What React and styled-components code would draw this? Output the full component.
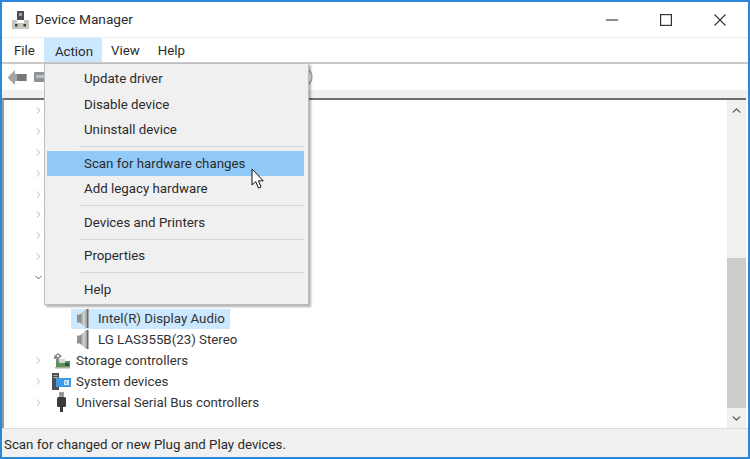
import styled, { createGlobalStyle } from "styled-components";
import { ChevronRight, ChevronDown, ChevronUp } from "lucide-react";

const GlobalStyle = createGlobalStyle`
  html, body { margin: 0; padding: 0; background: #fff; }
  body { font-family: Roboto, "Open Sans", sans-serif; color: #333; }
`;

const collapsed = [0, 1, 2, 3, 4, 5, 6, 7];

const AppIcon = () => (
  <svg width="17" height="18" viewBox="0 0 17 18">
    <rect x="5" y="0" width="7" height="10" fill="#4c4e55" />
    <rect x="7" y="2" width="3" height="3" fill="#8fa6b5" />
    <rect x="0" y="9" width="17" height="9" fill="#c9c6bd" />
    <rect x="5" y="9" width="7" height="3" fill="#fff" />
    <rect x="3" y="13" width="2.5" height="2.5" fill="#3c3c3c" />
    <rect x="11.5" y="13" width="2.5" height="2.5" fill="#3c3c3c" />
  </svg>
);

const BackIcon = () => (
  <svg width="20" height="17" viewBox="0 0 20 17">
    <path d="M0.5 8.5 L8 1 V5 H19.5 V12 H8 V16 Z" fill="#a3a3a3" />
    <path d="M10 5 H19.5 V12 H10 Z" fill="#777" />
  </svg>
);

const ToolIcon = () => (
  <svg width="12" height="10" viewBox="0 0 12 10">
    <rect x="0" y="0" width="12" height="10" rx="1" fill="#8e9396" />
    <rect x="2" y="3" width="8" height="3" fill="#bcc0c2" />
  </svg>
);

const HelpRing = () => (
  <svg width="20" height="20" viewBox="0 0 20 20">
    <circle cx="10" cy="10" r="9" fill="#fff" stroke="#a9a9a9" strokeWidth="1.5" />
  </svg>
);

const SpeakerIcon = () => (
  <svg width="16" height="21" viewBox="0 0 16 21">
    <defs>
      <linearGradient id="cone" x1="0" x2="1" y1="0" y2="0">
        <stop offset="0" stopColor="#7f837f" />
        <stop offset="0.55" stopColor="#d4d6d3" />
        <stop offset="1" stopColor="#999c99" />
      </linearGradient>
    </defs>
    <rect x="1" y="6.5" width="4" height="8" fill="#8f928f" />
    <path d="M4 6.5 L10 1 H11 V20 H10 L4 14.5 Z" fill="url(#cone)" />
    <rect x="11" y="1" width="1.5" height="19" fill="#666966" />
  </svg>
);

const StorageIcon = () => (
  <svg width="18" height="16" viewBox="0 0 18 16">
    <path d="M1 3 L5 0 L9 3 L7 5 H6 V9 H3 V6 H1 Z" fill="#8d8d8d" />
    <rect x="4" y="2" width="2" height="2" fill="#eee" />
    <rect x="3" y="8" width="14" height="6" fill="#5d9160" />
    <rect x="6" y="6" width="6" height="4" fill="#d6d6d6" />
    <rect x="12" y="10" width="4" height="3" fill="#2c5c35" />
    <rect x="2" y="14" width="15" height="1.5" fill="#b5b09c" />
  </svg>
);

const SystemIcon = () => (
  <svg width="19" height="17" viewBox="0 0 19 17">
    <rect x="0" y="0" width="7" height="17" fill="#4f5056" />
    <rect x="1.5" y="2" width="4" height="1" fill="#b5b5b5" />
    <rect x="1.5" y="4" width="4" height="1" fill="#b5b5b5" />
    <rect x="4" y="5" width="15" height="9" fill="#3f9ae6" />
    <rect x="12" y="7" width="5" height="5" fill="#cfe5f8" />
    <rect x="13.5" y="8" width="1" height="3" fill="#3f9ae6" />
  </svg>
);

const UsbIcon = () => (
  <svg width="11" height="20" viewBox="0 0 11 20">
    <rect x="3" y="0" width="5" height="6" fill="#a2a2a2" />
    <rect x="4" y="1.5" width="1" height="1" fill="#555" />
    <rect x="6" y="1.5" width="1" height="1" fill="#555" />
    <rect x="1" y="5" width="9" height="10" rx="1.5" fill="#3a3a3a" />
    <rect x="4" y="15" width="3" height="5" fill="#3a3a3a" />
  </svg>
);

const MinimizeGlyph = () => (
  <svg width="12" height="2" viewBox="0 0 12 2">
    <rect width="12" height="1.2" y="0.4" fill="#444" />
  </svg>
);

const MaximizeGlyph = () => (
  <svg width="12" height="12" viewBox="0 0 12 12">
    <rect x="0.6" y="0.6" width="10.8" height="10.8" fill="none" stroke="#333" strokeWidth="1.2" />
  </svg>
);

const CloseGlyph = () => (
  <svg width="12" height="12" viewBox="0 0 12 12">
    <path d="M0.5 0.5 L11.5 11.5 M11.5 0.5 L0.5 11.5" stroke="#333" strokeWidth="1.1" fill="none" />
  </svg>
);

const Cursor = () => (
  <CursorMark width="14" height="22" viewBox="0 0 14 22">
    <path d="M1 1 V17 L4.8 13.6 L7.4 20 L10 19 L7.5 12.8 H12.2 Z" fill="#fff" stroke="#111" strokeWidth="1" />
  </CursorMark>
);

const Closed = () => <ChevronRight size={11} strokeWidth={1.6} color="#999" />;

export default function App() {
  return (
    <Window>
      <GlobalStyle />
      <TitleBar>
        <AppIcon />
        <Title>Device Manager</Title>
        <Controls>
          <Control><MinimizeGlyph /></Control>
          <Control><MaximizeGlyph /></Control>
          <Control><CloseGlyph /></Control>
        </Controls>
      </TitleBar>
      <MenuBar>
        <MenuLabel>File</MenuLabel>
        <MenuLabel $active>Action</MenuLabel>
        <MenuLabel>View</MenuLabel>
        <MenuLabel>Help</MenuLabel>
      </MenuBar>
      <Toolbar>
        <BackIcon />
        <ToolIcon />
        <HelpRing />
      </Toolbar>
      <Content>
        <Tree>
          {collapsed.map((i) => (
            <Row key={i}>
              <Toggle><Closed /></Toggle>
            </Row>
          ))}
          <Row>
            <Toggle><ChevronDown size={11} strokeWidth={1.6} color="#333" /></Toggle>
          </Row>
          <Row />
          <Row>
            <DeviceCell $selected><SpeakerIcon /><span>Intel(R) Display Audio</span></DeviceCell>
          </Row>
          <Row>
            <DeviceCell><SpeakerIcon /><span>LG LAS355B(23) Stereo</span></DeviceCell>
          </Row>
          <Row>
            <Toggle><Closed /></Toggle>
            <IconSlot><StorageIcon /></IconSlot>
            <span>Storage controllers</span>
          </Row>
          <Row>
            <Toggle><Closed /></Toggle>
            <IconSlot><SystemIcon /></IconSlot>
            <span>System devices</span>
          </Row>
          <Row>
            <Toggle><Closed /></Toggle>
            <IconSlot><UsbIcon /></IconSlot>
            <span>Universal Serial Bus controllers</span>
          </Row>
        </Tree>
        <Scrollbar>
          <ScrollButton><ChevronUp size={13} strokeWidth={2.4} color="#555" /></ScrollButton>
          <Track><Thumb /></Track>
          <ScrollButton><ChevronDown size={13} strokeWidth={2.4} color="#555" /></ScrollButton>
        </Scrollbar>
      </Content>
      <StatusBar>Scan for changed or new Plug and Play devices.</StatusBar>

      <DropMenu>
        <MenuItem>Update driver</MenuItem>
        <MenuItem>Disable device</MenuItem>
        <MenuItem>Uninstall device</MenuItem>
        <Separator />
        <MenuItem $hover>Scan for hardware changes</MenuItem>
        <MenuItem>Add legacy hardware</MenuItem>
        <Separator />
        <MenuItem>Devices and Printers</MenuItem>
        <Separator />
        <MenuItem>Properties</MenuItem>
        <Separator />
        <MenuItem>Help</MenuItem>
      </DropMenu>
      <Cursor />
    </Window>
  );
}

const Window = styled.div`
  position: relative;
  box-sizing: border-box;
  width: 750px;
  height: 459px;
  border: 2px solid #2b88d8;
  background: #fff;
  display: flex;
  flex-direction: column;
  overflow: hidden;
`;

const TitleBar = styled.div`
  height: 35px;
  display: flex;
  align-items: center;
  padding-left: 10px;
  border-bottom: 1px solid #ececec;
`;

const Title = styled.div`
  margin-left: 6px;
  margin-top: -1px;
  font-size: 13.7px;
  color: #2b2b2b;
`;

const Controls = styled.div`
  margin-left: auto;
  margin-right: 4px;
  display: flex;
  gap: 42px;
  padding-right: 18px;
`;

const Control = styled.div`
  width: 12px;
  height: 32px;
  display: flex;
  align-items: center;
  justify-content: center;
`;

const MenuBar = styled.div`
  height: 24px;
  display: flex;
  padding-left: 3px;
  border-bottom: 2px solid #c9c9c9;
`;

const MenuLabel = styled.div`
  display: flex;
  align-items: center;
  padding: ${(p) => (p.$active ? "2px 9px 0 11px" : "0 9px")};
  font-size: 13.3px;
  background: ${(p) => (p.$active ? "#cce8ff" : "transparent")};
  color: #2b2b2b;
`;

const Toolbar = styled.div`
  height: 26px;
  display: flex;
  align-items: center;
  padding-left: 5px;
  gap: 7px;

  svg:last-child {
    margin-left: 240px;
  }
`;

const Content = styled.div`
  flex: 1;
  min-height: 0;
  display: flex;
  border-top: 8px solid #f0f0f0;
`;

const Tree = styled.div`
  flex: 1;
  border-top: 2px solid #6d6d6d;
  border-left: 2px solid #9a9a9a;
  padding-top: 0.6px;
`;

const Row = styled.div`
  height: 20.8px;
  display: flex;
  align-items: center;
  font-size: 13.3px;
  color: #333;
  padding-left: 28.5px;
`;

const Toggle = styled.div`
  width: 12px;
  display: flex;
  justify-content: center;
`;

const IconSlot = styled.div`
  width: 22px;
  margin-left: 6px;
  margin-right: 3.5px;
  display: flex;
  justify-content: center;
`;

const DeviceCell = styled.div`
  margin-left: 38.5px;
  height: 20.8px;
  padding: 0 5px 0 5px;
  display: flex;
  align-items: center;
  gap: 6px;
  background: ${(p) => (p.$selected ? "#cce8ff" : "transparent")};
`;

const Scrollbar = styled.div`
  width: 19px;
  margin-right: 2px;
  display: flex;
  flex-direction: column;
  background: #f0f0f0;
  border-top: 2px solid #6d6d6d;
`;

const ScrollButton = styled.div`
  height: 20px;
  display: flex;
  align-items: center;
  justify-content: center;
`;

const Track = styled.div`
  flex: 1;
  display: flex;
  flex-direction: column;
  justify-content: flex-end;
`;

const Thumb = styled.div`
  height: 150px;
  background: #cdcdcd;
`;

const StatusBar = styled.div`
  box-sizing: border-box;
  height: 29px;
  display: flex;
  align-items: center;
  padding: 3px 0 0 2px;
  font-size: 13.3px;
  background: #f0f0f0;
  border-top: 1px solid #dcdcdc;
  color: #2b2b2b;
`;

const DropMenu = styled.div`
  position: absolute;
  left: 42px;
  top: 61px;
  box-sizing: border-box;
  width: 265px;
  height: 242px;
  padding: 2px 4px 0 2px;
  background: #f0f0f0;
  border: 1px solid #bdbdbd;
  box-shadow: 2px 2px 2px rgba(0, 0, 0, 0.3);
`;

const MenuItem = styled.div`
  height: 25.5px;
  display: flex;
  align-items: center;
  padding-left: 37px;
  font-size: 13.3px;
  color: #2b2b2b;
  background: ${(p) => (p.$hover ? "#91c9f7" : "transparent")};
`;

const Separator = styled.div`
  height: 1px;
  margin: 3.5px 0 3.5px 32px;
  background: #d7d7d7;
`;

const CursorMark = styled.svg`
  position: absolute;
  left: 249px;
  top: 166px;
`;
